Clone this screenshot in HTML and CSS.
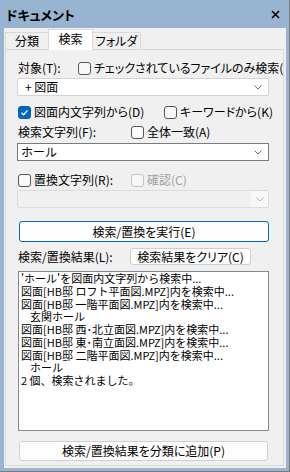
FILE: index.html
```html
<!DOCTYPE html>
<html lang="ja">
  <head>
    <meta charset="UTF-8" />
    <title>ドキュメント</title>
    <link rel="stylesheet" href="styles.css">
  </head>
  <body>
    <div class="window">
      <div class="titlebar">
        <span class="title">ドキュメント</span>
        <svg class="close" width="9" height="9" viewBox="0 0 9 9">
          <path d="M1 1 L8 8 M8 1 L1 8" stroke="#000" stroke-width="1.6" fill="none" />
        </svg>
      </div>

      <div class="body">
        <div class="tabs">
          <div class="tab t1">分類</div>
          <div class="tab t2 active">検索</div>
          <div class="tab t3">フォルダ</div>
        </div>

        <div class="panel">
          <div class="row r-target">
            <span class="label w60">対象(T):</span>
            <span class="check"><span class="cb"></span>チェックされているファイルのみ検索(E)</span>
          </div>

          <div class="combo c-target">
            <span>+ 図面</span>
            <svg width="8" height="5" viewBox="0 0 8 5"><path d="M0.5 0.5 L4 4 L7.5 0.5" stroke="#707070" fill="none" /></svg>
          </div>

          <div class="row r-from">
            <span class="check w146"><span class="cb on"><svg width="11" height="11" viewBox="0 0 11 11"><path d="M2.5 5.8 L4.6 7.8 L8.6 3.4" stroke="#fff" stroke-width="1.3" fill="none" /></svg></span>図面内文字列から(D)</span>
            <span class="check"><span class="cb"></span>キーワードから(K)</span>
          </div>

          <div class="row r-find">
            <span class="label w112">検索文字列(F):</span>
            <span class="check"><span class="cb"></span>全体一致(A)</span>
          </div>

          <div class="combo c-find">
            <span>ホール</span>
            <svg width="8" height="5" viewBox="0 0 8 5"><path d="M0.5 0.5 L4 4 L7.5 0.5" stroke="#707070" fill="none" /></svg>
          </div>

          <div class="row r-replace">
            <span class="check w112"><span class="cb"></span>置換文字列(R):</span>
            <span class="check off"><span class="cb"></span>確認(C)</span>
          </div>

          <div class="combo c-replace">
            <span></span>
            <span class="arrow">
              <svg width="8" height="5" viewBox="0 0 8 5"><path d="M0.5 0.5 L4 4 L7.5 0.5" stroke="#b8b8b8" fill="none" /></svg>
            </span>
          </div>

          <div class="btn b-run">検索/置換を実行(E)</div>

          <div class="row r-result">
            <span class="label w113">検索/置換結果(L):</span>
            <div class="btn b-clear">検索結果をクリア(C)</div>
          </div>

          <div class="results">
            <div>'ホール'を図面内文字列から検索中...</div>
            <div>図面[HB邸 ロフト平面図.MPZ]内を検索中...</div>
            <div>図面[HB邸 一階平面図.MPZ]内を検索中...</div>
            <div class="indent">玄関ホール</div>
            <div>図面[HB邸 西･北立面図.MPZ]内を検索中...</div>
            <div>図面[HB邸 東･南立面図.MPZ]内を検索中...</div>
            <div>図面[HB邸 二階平面図.MPZ]内を検索中...</div>
            <div class="indent">ホール</div>
            <div>2 個、検索されました。</div>
          </div>

          <div class="btn b-add">検索/置換結果を分類に追加(P)</div>
        </div>
      </div>
    </div>
  </body>
</html>
```

FILE: styles.css
```css
* {
  box-sizing: border-box;
}

body {
  margin: 0;
  font-family: "Noto Sans CJK JP", sans-serif;
  font-size: 12px;
  color: #000;
}

.window {
  width: 290px;
  height: 472px;
  background-color: #99b4d1;
  padding: 0 3px 3px 4px;
  border-right: 1px solid #7a7a7a;
  border-bottom: 1px solid #7a7a7a;
  display: flex;
  flex-direction: column;
}

.titlebar {
  height: 28px;
  flex-shrink: 0;
  display: flex;
  align-items: center;
  justify-content: space-between;
  padding: 1px 6px 0 2px;
}

.title {
  font-size: 13px;
  font-weight: bold;
  line-height: 16px;
  font-feature-settings: "palt";
}

.body {
  flex: 1;
  background-color: #f0f0f0;
  padding: 0 2px 2px 1px;
  display: flex;
  flex-direction: column;
}

/* タブ */
.tabs {
  height: 21px;
  flex-shrink: 0;
  display: flex;
  align-items: flex-end;
}

.tab {
  height: 17px;
  border: 1px solid #d9d9d9;
  border-bottom: none;
  background-color: #f0f0f0;
  display: flex;
  align-items: center;
  justify-content: center;
  line-height: 14px;
  font-feature-settings: "palt";
}

.tab + .tab {
  margin-left: -1px;
}

.t1 {
  width: 44px;
}

.t2 {
  width: 45px;
}

.t3 {
  width: 49px;
}

.tab.active {
  height: 21px;
  margin-bottom: -1px;
  padding-bottom: 2px;
  background-color: #fff;
  position: relative;
}

.panel {
  flex: 1;
  border: 1px solid #d9d9d9;
  background-color: #f0f0f0;
  padding: 10px 13px 0 11px;
  overflow: hidden;
  display: flex;
  flex-direction: column;
}

.row {
  height: 16px;
  flex-shrink: 0;
  display: flex;
  align-items: center;
  white-space: nowrap;
  line-height: 16px;
  font-feature-settings: "palt";
}

.label {
  flex-shrink: 0;
  padding-left: 1px;
}

.w60 {
  width: 60px;
}

.w112,
.w146.check {
  flex-shrink: 0;
}

.w112 {
  width: 113px;
}

.w113 {
  width: 113px;
}

.w146 {
  width: 146px;
}

.check {
  display: flex;
  align-items: center;
  padding-left: 1px;
}

.cb {
  width: 13px;
  height: 13px;
  margin-right: 3px;
  flex-shrink: 0;
  border: 1px solid #555;
  border-radius: 3px;
  background-color: #f9f9f9;
  display: flex;
  align-items: center;
  justify-content: center;
}

.cb.on {
  border-color: #0067c0;
  background-color: #0067c0;
}

.check.off {
  color: #a0a0a0;
}

.check.off .cb {
  border-color: #c4c4c4;
  background-color: #f6f6f6;
}

/* コンボボックス */
.combo {
  height: 18px;
  margin-right: 1px;
  flex-shrink: 0;
  display: flex;
  align-items: center;
  justify-content: space-between;
  background-color: #fff;
  border: 1px solid #d4d4d4;
  border-radius: 2px;
  padding: 0 6px 0 7px;
  line-height: 16px;
}

.c-target {
  margin-top: 2px;
}

.c-find {
  margin-top: 3px;
  border-color: #7a7a7a;
  border-radius: 0;
  padding-left: 3px;
}

.c-replace {
  margin-top: 2px;
  background-color: #f0f0f0;
  border-color: #dcdcdc;
  padding: 0;
}

.c-replace .arrow {
  width: 17px;
  height: 16px;
  background-color: #f7f7f7;
  display: flex;
  align-items: center;
  justify-content: center;
}

.r-from {
  margin-top: 8px;
}

.r-find {
  margin-top: 4px;
}

.r-replace {
  margin-top: 11px;
}

/* ボタン */
.btn {
  height: 21px;
  flex-shrink: 0;
  display: flex;
  align-items: center;
  justify-content: center;
  background-color: #fdfdfd;
  border: 1px solid #d0d0d0;
  border-radius: 3px;
  line-height: 16px;
  font-feature-settings: "palt";
}

.b-run {
  margin: 13px 1px 0 2px;
  border-color: #0067c0;
}

.r-result {
  height: 17px;
  margin-top: 6px;
}

.b-clear {
  width: 121px;
  height: 17px;
}

.results {
  height: 160px;
  flex-shrink: 0;
  margin: 6px 1px 0 1px;
  background-color: #fff;
  border: 1px solid #828790;
  padding: 0 2px;
  font-size: 11px;
  line-height: 12.75px;
  white-space: nowrap;
  overflow: hidden;
}

.indent {
  padding-left: 9px;
}

.b-add {
  height: 20px;
  margin: 10px 2px 0 2px;
}
```
